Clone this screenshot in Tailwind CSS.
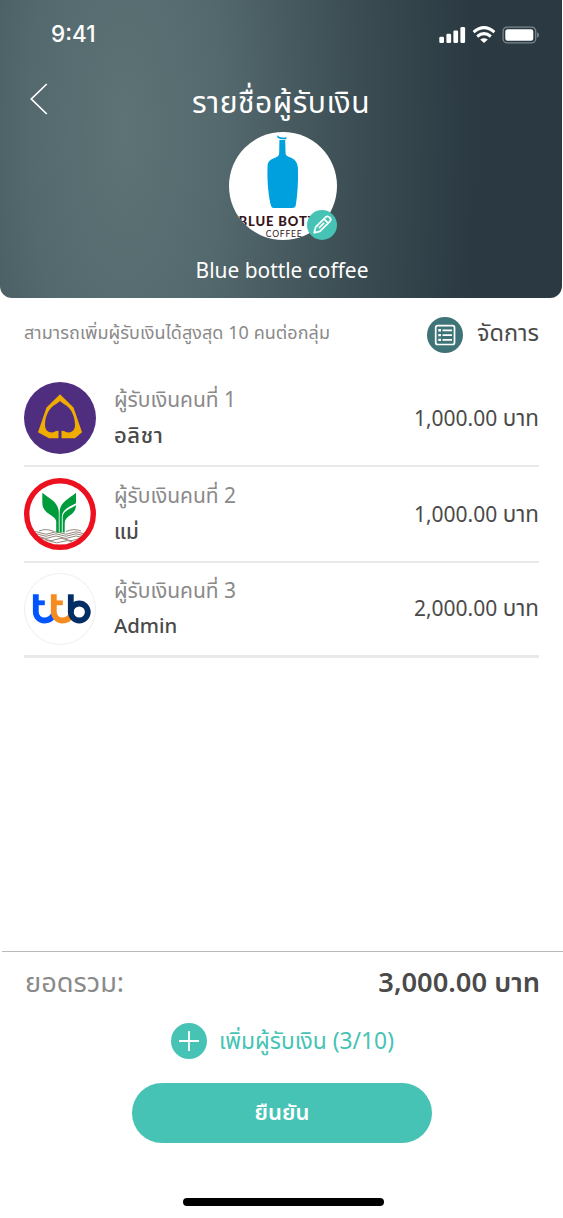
<!DOCTYPE html>
<html lang="th">
<head>
<meta charset="utf-8">
<title>รายชื่อผู้รับเงิน</title>
<script src="https://cdn.jsdelivr.net/npm/@tailwindcss/browser@4"></script>
</head>
<body class="bg-white font-['Noto_Sans','Noto_Sans_Thai',sans-serif] text-[#4a4a4a]">
<main class="flex h-[1218px] w-[563px] flex-col overflow-hidden whitespace-nowrap">
  <header class="flex h-[298px] w-[562px] shrink-0 flex-col rounded-b-xl bg-[radial-gradient(ellipse_350px_900px_at_125px_130px,#5d7376_0%,#54696d_28%,#465a5f_48%,#37484f_75%,#2b3a42_100%)] text-white">
    <div class="flex h-[70px] shrink-0 items-center justify-between pr-[23px] pb-px pl-[51px]">
      <span class="font-['Inter',sans-serif] text-[22.5px] leading-none font-medium">9:41</span>
      <svg class="h-5 w-[101px]" viewBox="438 24.5 101 20" fill="#fff">
        <rect x="439.3" y="36.3" width="4.7" height="6.2" rx="1.3"/><rect x="446.4" y="33.3" width="4.7" height="9.2" rx="1.3"/><rect x="453.4" y="30" width="4.7" height="12.5" rx="1.3"/><rect x="460.4" y="26.5" width="4.7" height="16" rx="1.3"/>
        <g fill="none" stroke="#fff" stroke-width="3"><path d="M473.6 31.6Q484 22.6 494.4 31.6M477.2 36Q484 30.2 490.8 36"/></g>
        <path d="M480.2 39.1Q484 36.2 487.8 39.1L484 42.6Z"/>
        <rect x="503.1" y="26.6" width="32.6" height="15.8" rx="4.2" fill="none" stroke="#fff" stroke-opacity=".38" stroke-width="1.3"/>
        <rect x="505.3" y="28.8" width="28" height="11.4" rx="2.3"/><path d="M537.2 31.7Q539 32.4 539 34.5T537.2 37.3Z" fill-opacity=".4"/>
      </svg>
    </div>
    <div class="grid h-[62px] shrink-0 grid-cols-[64px_1fr_64px]">
      <svg class="mt-3 ml-[28px] h-[34px] w-6" viewBox="28 82 24 34" fill="none" stroke="#fff" stroke-width="1.7"><path d="M46.8 84L31.3 99L46.8 114"/></svg>
      <h1 class="text-center text-[30px] leading-[64px] tracking-[0.5px]">รายชื่อผู้รับเงิน</h1>
    </div>
    <div class="relative ml-[229px] size-[108px] shrink-0">
      <svg class="size-[108px]" viewBox="0 0 108 108">
        <defs><clipPath id="c"><circle cx="54" cy="54" r="54"/></clipPath></defs>
        <circle cx="54" cy="54" r="54" fill="#fff"/>
        <g clip-path="url(#c)">
          <path fill="#009fde" d="M48.2 3.2C50 5.2 53 5.8 57.4 5.3V7.2C53 7.8 49 6.8 48.2 5ZM50.4 8.1H56.2L56.6 22C57.5 24.5 60 24.5 63.5 26.5C67 28.5 69 32 69 38C69.3 50 68.5 62 67 72C66.5 75 65.5 76 63 76H45C42.5 76 42 74 41.3 71C39 60 38 46 38.6 33.5C39 27.5 44 27 47.5 25C49.7 23.8 50.2 23 50.2 20Z"/>
          <text x="9.5" y="94" textLength="93" lengthAdjust="spacing" font-family="Lato,sans-serif" font-weight="900" font-size="13" fill="#351519">BLUE BOTTLE</text>
          <text x="36.8" y="104.5" textLength="36" font-family="Lato,sans-serif" font-size="8.6" fill="#351519">COFFEE</text>
        </g>
      </svg>
      <svg class="absolute top-[78px] left-[78px] size-[30px]" viewBox="0 0 30 30"><circle cx="15" cy="15" r="15" fill="#46c3b4"/><g transform="rotate(45 15 15)" fill="none" stroke="#fff" stroke-width="1.7" stroke-linejoin="round"><path d="M12 6.8Q12 4.3 15 4.3T18 6.8V21L15 26L12 21ZM12 9.3H18M15 12V19.5"/></g></svg>
    </div>
    <p class="w-[564px] shrink-0 text-center text-[20.9px] leading-[60px]">Blue bottle coffee</p>
  </header>

  <section class="flex flex-col pr-6 pl-6">
    <div class="flex h-[73px] items-center">
      <p class="pb-1 text-[18px] tracking-[0.05px] text-[#8a8a8a]">สามารถเพิ่มผู้รับเงินได้สูงสุด 10 คนต่อกลุ่ม</p>
      <svg class="ml-auto size-9" viewBox="0 0 36 36"><circle cx="18" cy="18" r="18" fill="#3e7477"/><g fill="none" stroke="#fff" stroke-width="1.7"><rect x="8.7" y="8.7" width="18.8" height="18.8" rx="2"/><path d="M15.5 13.3H25M15.5 18.1H25M15.5 22.9H25"/><path stroke-width="2.4" d="M11.3 13.3H14M11.3 18.1H14M11.3 22.9H14"/></g></svg>
      <p class="ml-[14px] pb-1 text-[23.5px]">จัดการ</p>
    </div>

    <article class="flex h-24 items-center border-b-2 border-[#e9e9e9]">
      <svg class="size-[72px]" viewBox="0 0 72 72"><circle cx="36" cy="36" r="36" fill="#4f2d7f"/><path fill="#f0ac00" d="M36 12.3L49.5 25.5L58 50.3L51 56.3H37.5V48.8C40 48.5 41.5 50.4 44.5 50.4C49 50.4 51 47 51 43C51 36 48.5 30 45 26C42 22.7 38.5 21.5 36 19C33.5 21.5 30 22.7 27 26C23.5 30 21 36 21 43C21 47 23 50.4 27.5 50.4C30.5 50.4 32 48.5 34.5 48.8V56.3H25L14 50.3L22.5 25.5Z"/></svg>
      <div class="ml-[18px] pb-1"><p class="text-[21px] leading-9 text-[#8a8a8a]">ผู้รับเงินคนที่ 1</p><p class="text-[22px] leading-[34px] font-medium tracking-[0.6px]">อลิชา</p></div>
      <p class="ml-auto text-[21px]">1,000.00 <span class="text-[22.4px]">บาท</span></p>
    </article>
    <article class="flex h-24 items-center border-b-2 border-[#e9e9e9]">
      <svg class="size-[72px]" viewBox="0 0 72 72">
        <defs><clipPath id="k"><circle cx="36" cy="36" r="31"/></clipPath></defs>
        <circle cx="36" cy="36" r="36" fill="#fff"/>
        <g clip-path="url(#k)" fill="none" stroke="#94867c" stroke-width="1"><path d="M8 54.5Q12 52.5 17 55T27 55T37 55T47 55T57 55T67 55M6 56.5Q12 54.5 17 57T27 57T37 57T47 57T57 57T67 57M8 58.7Q12 56.7 17 59.2T27 59.2T37 59.2T47 59.2T57 59.2T67 59.2M13 61Q17 59 22 61.5T32 61.5T42 61.5T52 61.5T60 61M20 63.5Q24 61.5 28 63.7T38 63.7T48 63.7M15 53Q22 50 30 53.5M42 53.5Q50 50 57 53"/></g>
        <g fill="#009b3a"><path d="M18.3 14.7C26 21 34.8 24 34.8 35V54.5H32.2V43C31 38.5 25 37 21.5 33C19 30 18.3 28 18.3 24Z"/><path d="M52 14.7V25.3C44 29.5 38.2 31.5 37.8 39V54.5H35.6V35C35.6 24 44 21.5 52 14.7Z"/><path d="M52 27.3C52 37.5 41 37 40.7 45V54.5H38.7V39C39 33 46 31 52 27.3Z"/></g>
        <circle cx="36" cy="36" r="33.3" fill="none" stroke="#ed1120" stroke-width="5.4"/>
      </svg>
      <div class="ml-[18px] pb-[2px]"><p class="text-[21px] leading-9 text-[#8a8a8a]">ผู้รับเงินคนที่ 2</p><p class="text-[20.5px] leading-9 font-medium">แม่</p></div>
      <p class="ml-auto text-[21px]">1,000.00 <span class="text-[22.4px]">บาท</span></p>
    </article>
    <article class="flex h-[95px] items-center border-b-3 border-[#e9e9e9]">
      <svg class="size-[72px]" viewBox="0 0 72 72"><circle cx="36" cy="36" r="35.5" fill="#fff" stroke="#eee"/>
        <g fill="none" stroke-width="5.8"><path stroke="#0055ff" d="M11.8 21.3V39A8.5 8.5 0 0 0 20.3 47.5Q26.5 47.5 29.5 42"/><path stroke="#0055ff" stroke-width="4.8" d="M11.8 29.8H20.8"/><path stroke="#f68b1f" d="M29.8 21.3V39A8.5 8.5 0 0 0 38.3 47.5Q44.5 47.5 47.5 42"/><path stroke="#f68b1f" stroke-width="4.8" d="M29.8 29.8H38.8"/><path stroke="#002d63" d="M46.8 21.3V39"/><circle cx="55.3" cy="39" r="8.5" stroke="#002d63"/></g>
      </svg>
      <div class="ml-[18px] pb-1"><p class="text-[21px] leading-9 text-[#8a8a8a]">ผู้รับเงินคนที่ 3</p><p class="text-[20.3px] leading-[35px] font-medium">Admin</p></div>
      <p class="ml-auto pb-[2px] text-[21px]">2,000.00 <span class="text-[22.4px]">บาท</span></p>
    </article>
  </section>

  <footer class="mt-auto ml-[2px] flex h-[267px] shrink-0 flex-col items-center border-t border-[#b8bab9]">
    <div class="flex h-[62px] w-full items-center justify-between pr-[23px] pb-[2px] pl-[23px]"><p class="text-[27.2px] text-[#8a8a8a]">ยอดรวม:</p><p class="text-[27.3px] font-semibold">3,000.00 บาท</p></div>
    <div class="flex h-[54px] items-center text-[#46c3b4]">
      <svg class="size-9" viewBox="0 0 36 36"><circle cx="18" cy="18" r="18" fill="#46c3b4"/><path d="M8 18H28M18 8V28" stroke="#fff" stroke-width="1.8"/></svg>
      <p class="ml-3 text-[22.8px]">เพิ่มผู้รับเงิน (3/10)</p>
    </div>
    <button class="mt-[15px] mr-[1px] h-[60px] w-[300px] rounded-full bg-[#46c3b4] pb-[3px] text-[22px] font-semibold text-white">ยืนยัน</button>
    <div class="mt-auto mb-3 ml-[2px] h-2 w-[201px] rounded-full bg-black"></div>
  </footer>
</main>
</body>
</html>
